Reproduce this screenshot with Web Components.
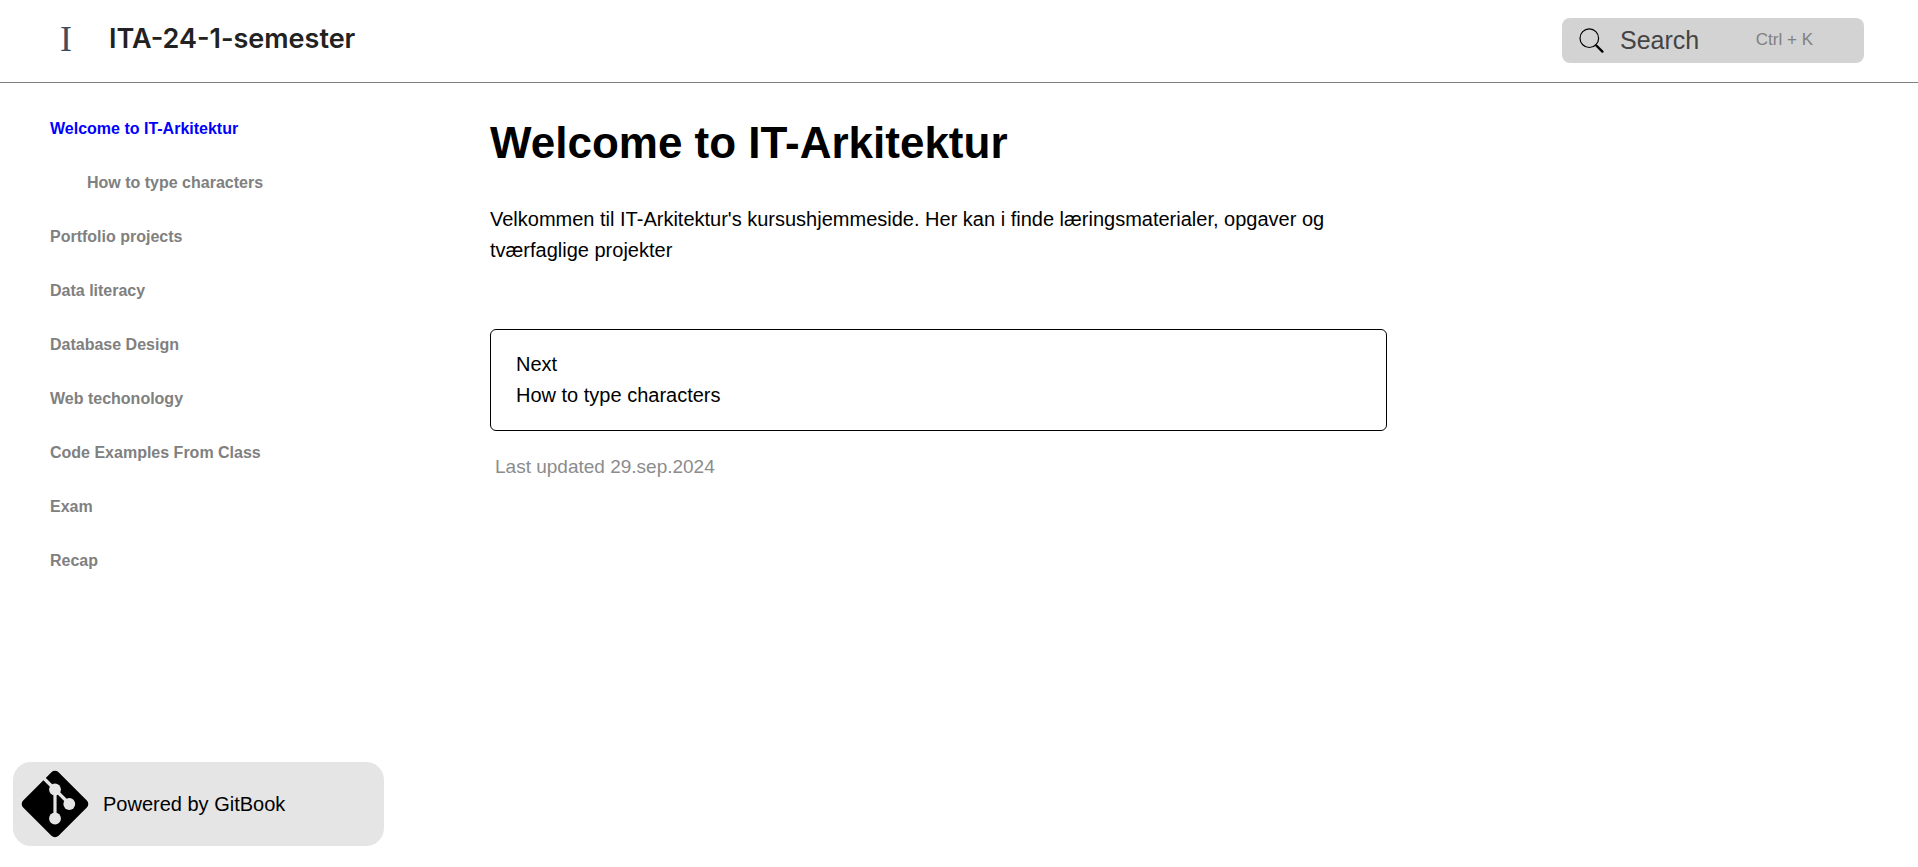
<!DOCTYPE html>
<html lang="da">
<head>
<meta charset="utf-8">
<meta name="viewport" content="width=device-width, initial-scale=1">
<title>ITA-24-1-semester</title>
<style>
  body {
    margin: 0;
    background: #fff;
    color: #000;
    font-family: "Liberation Sans", Arial, Helvetica, sans-serif;
    font-size: 20px;
    line-height: 31px;
  }
</style>
</head>
<body>
<doc-layout>
  <site-header slot="header">
    <site-brand slot="brand" initial="I">ITA-24-1-semester</site-brand>
    <search-box shortcut="Ctrl + K">Search</search-box>
  </site-header>
  <side-nav slot="sidebar">
    <nav-item href="#welcome" current>Welcome to IT-Arkitektur</nav-item>
    <nav-item href="#characters" nested>How to type characters</nav-item>
    <nav-item href="#portfolio">Portfolio projects</nav-item>
    <nav-item href="#literacy">Data literacy</nav-item>
    <nav-item href="#database">Database Design</nav-item>
    <nav-item href="#web">Web techonology</nav-item>
    <nav-item href="#code">Code Examples From Class</nav-item>
    <nav-item href="#exam">Exam</nav-item>
    <nav-item href="#recap">Recap</nav-item>
  </side-nav>
  <powered-by slot="badge" href="#gitbook">Powered by GitBook</powered-by>
  <doc-article>
    <span slot="title">Welcome to IT-Arkitektur</span>
    Velkommen til IT-Arkitektur's kursushjemmeside. Her kan i finde læringsmaterialer, opgaver og tværfaglige projekter
    <next-link slot="next" href="#characters">How to type characters</next-link>
    <span slot="updated">Last updated 29.sep.2024</span>
  </doc-article>
</doc-layout>

<script>
  class BaseElement extends HTMLElement {
    render(markup) {
      const template = document.createElement('template');
      template.innerHTML = markup;
      this.attachShadow({ mode: 'open' }).append(template.content.cloneNode(true));
    }
  }

  customElements.define('doc-layout', class extends BaseElement {
    constructor() {
      super();
      this.render(`
        <style>
          :host { display: flex; flex-direction: column; min-height: 100vh; }
          .columns { flex: 1; display: grid; grid-template-columns: 490px minmax(0, 897px); }
          aside {
            box-sizing: border-box;
            display: flex; flex-direction: column; justify-content: space-between;
            padding: 30px 106px 21px 13px;
          }
        </style>
        <slot name="header"></slot>
        <div class="columns">
          <aside><slot name="sidebar"></slot><slot name="badge"></slot></aside>
          <main><slot></slot></main>
        </div>`);
    }
  });

  customElements.define('site-header', class extends BaseElement {
    constructor() {
      super();
      this.render(`
        <style>
          :host { display: block; border-bottom: 1px solid #808080; }
          header {
            display: flex; align-items: flex-start; justify-content: space-between;
            padding: 18px 54px 19px 60px;
          }
        </style>
        <header><slot name="brand"></slot><slot></slot></header>`);
    }
  });

  customElements.define('site-brand', class extends BaseElement {
    constructor() {
      super();
      this.render(`
        <style>
          :host { display: block; }
          a { display: flex; gap: 37px; line-height: 42px; color: #222; text-decoration: none; }
          .mark { font-family: "Liberation Serif", "Times New Roman", serif; font-size: 36px; color: #454b5a; }
          .name { font-family: Inter, sans-serif; font-size: 27px; font-weight: 600; }
        </style>
        <a href="#home"><span class="mark"></span><span class="name"><slot></slot></span></a>`);
      this.shadowRoot.querySelector('.mark').textContent = this.getAttribute('initial');
    }
  });

  customElements.define('search-box', class extends BaseElement {
    constructor() {
      super();
      this.render(`
        <style>
          :host { display: block; }
          label {
            box-sizing: border-box; width: 302px; height: 45px;
            display: flex; align-items: center;
            padding: 0 51px 0 17px;
            background: #d3d3d3; border-radius: 8px;
          }
          svg { flex: none; width: 25px; height: 25px; margin-right: 16px; }
          input {
            flex: 1; min-width: 0; padding: 0; border: 0; outline: 0; background: none;
            font: inherit; font-size: 25px; line-height: 31px; height: 31px; color: #444;
          }
          input::placeholder { color: #444; opacity: 1; }
          kbd { font: inherit; font-size: 17px; line-height: 31px; height: 33px; color: #808080; }
        </style>
        <label>
          <svg viewBox="0 0 25 25" fill="none" stroke="#000" aria-hidden="true">
            <circle cx="10.3" cy="10.2" r="9.3" stroke-width="1.2"/>
            <path d="M16.6 16.8 L18.4 18.6" stroke-width="1.5"/>
            <path d="M17.8 18 L23.4 23.6" stroke-width="2.4" stroke-linecap="round"/>
          </svg>
          <input type="text" aria-label="Search">
          <kbd></kbd>
        </label>`);
      this.shadowRoot.querySelector('input').placeholder = this.textContent.trim();
      this.shadowRoot.querySelector('kbd').textContent = this.getAttribute('shortcut');
    }
  });

  customElements.define('side-nav', class extends BaseElement {
    constructor() {
      super();
      this.render(`
        <style>
          :host { display: block; }
          nav { display: flex; flex-direction: column; gap: 23px; padding-left: 37px; }
        </style>
        <nav><slot></slot></nav>`);
    }
  });

  customElements.define('nav-item', class extends BaseElement {
    constructor() {
      super();
      this.render(`
        <style>
          :host { display: block; font-size: 16px; font-weight: 700; color: #808080; }
          :host([current]) { color: #00f; }
          :host([nested]) { padding-left: 37px; }
          a { color: inherit; text-decoration: none; }
        </style>
        <a><slot></slot></a>`);
      const link = this.shadowRoot.querySelector('a');
      link.href = this.getAttribute('href');
      if (this.hasAttribute('current')) link.setAttribute('aria-current', 'page');
    }
  });

  customElements.define('powered-by', class extends BaseElement {
    constructor() {
      super();
      this.render(`
        <style>
          :host { display: block; }
          a {
            display: flex; align-items: center; gap: 14px;
            padding: 8px; border-radius: 18px;
            background: #e5e5e5; color: #000; text-decoration: none;
          }
          svg { flex: none; width: 68px; height: 68px; }
        </style>
        <a>
          <svg viewBox="0 0 68 68" aria-hidden="true">
            <rect x="9" y="9" width="50" height="50" rx="5" transform="rotate(45 34 34)"/>
            <g fill="none" stroke="#e5e5e5" stroke-width="3.2">
              <path d="M22 7.5 L34 19.5 L48 33.5"/>
              <path d="M34 19.5 V48.5"/>
            </g>
            <g fill="#e5e5e5">
              <circle cx="34" cy="19.5" r="5.9"/>
              <circle cx="48.3" cy="34" r="5.9"/>
              <circle cx="34" cy="48.5" r="5.9"/>
            </g>
          </svg>
          <span><slot></slot></span>
        </a>`);
      this.shadowRoot.querySelector('a').href = this.getAttribute('href');
    }
  });

  customElements.define('doc-article', class extends BaseElement {
    constructor() {
      super();
      this.render(`
        <style>
          :host { display: block; padding-top: 35px; }
          h1 { margin: 0 0 36px; font-size: 44px; line-height: 50px; }
          p { margin: 0; }
          .next { margin: 63px 0 20px; }
          footer { padding-left: 5px; font-size: 19px; color: #8c8c8c; }
        </style>
        <article>
          <h1><slot name="title"></slot></h1>
          <p><slot></slot></p>
          <div class="next"><slot name="next"></slot></div>
          <footer><slot name="updated"></slot></footer>
        </article>`);
    }
  });

  customElements.define('next-link', class extends BaseElement {
    constructor() {
      super();
      this.render(`
        <style>
          :host { display: block; }
          a {
            display: flex; flex-direction: column;
            padding: 19px 25px; border: 1px solid #000; border-radius: 6px;
            color: inherit; text-decoration: none;
          }
        </style>
        <a><span>Next</span><span><slot></slot></span></a>`);
      this.shadowRoot.querySelector('a').href = this.getAttribute('href');
    }
  });
</script>
</body>
</html>
